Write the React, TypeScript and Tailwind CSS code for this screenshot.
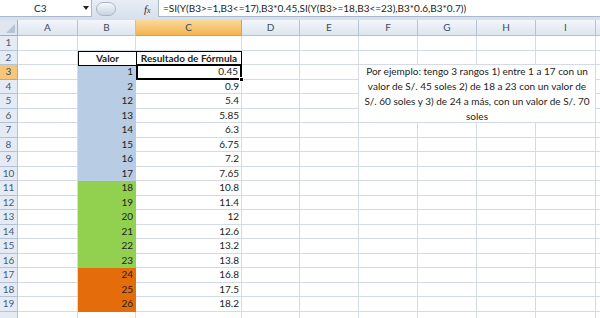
import React from "react";

const cols = ["A", "B", "C", "D", "E", "F", "G", "H", "I", ""];
type Row = { b?: string; c?: string; fill?: string };
const rows: Row[] = [
  {},
  {},
  { b: "1", c: "0.45", fill: "bg-[#b8cce4]" },
  { b: "2", c: "0.9", fill: "bg-[#b8cce4]" },
  { b: "12", c: "5.4", fill: "bg-[#b8cce4]" },
  { b: "13", c: "5.85", fill: "bg-[#b8cce4]" },
  { b: "14", c: "6.3", fill: "bg-[#b8cce4]" },
  { b: "15", c: "6.75", fill: "bg-[#b8cce4]" },
  { b: "16", c: "7.2", fill: "bg-[#b8cce4]" },
  { b: "17", c: "7.65", fill: "bg-[#b8cce4]" },
  { b: "18", c: "10.8", fill: "bg-[#92d050]" },
  { b: "19", c: "11.4", fill: "bg-[#92d050]" },
  { b: "20", c: "12", fill: "bg-[#92d050]" },
  { b: "21", c: "12.6", fill: "bg-[#92d050]" },
  { b: "22", c: "13.2", fill: "bg-[#92d050]" },
  { b: "23", c: "13.8", fill: "bg-[#92d050]" },
  { b: "24", c: "16.8", fill: "bg-[#e46c0a]" },
  { b: "25", c: "17.5", fill: "bg-[#e46c0a]" },
  { b: "26", c: "18.2", fill: "bg-[#e46c0a]" },
  {},
];

const grid = "border-r border-b border-[#d4dbe7]";

export default function App() {
  const cells: React.ReactNode[] = [];
  cells.push(
    <div key="corner" className="bg-[#dfe6f0] border-r border-b border-[#9eb0c8] relative">
      <div className="absolute right-[2px] bottom-[2px] w-0 h-0 border-l-[9px] border-l-transparent border-b-[9px] border-b-[#b6c3d6]" />
    </div>
  );
  cols.forEach((c, i) => {
    const active = c === "C";
    cells.push(
      <div
        key={"h" + i}
        className={
          "flex items-center justify-center text-[10px] text-[#3c4a60] border-r border-b " +
          (active
            ? "bg-gradient-to-b from-[#f9d99a] to-[#f2b44c] border-[#c2a56e]"
            : "bg-gradient-to-b from-[#f3f6fa] to-[#dde5ef] border-[#b4c2d5]")
        }
      >
        {c}
      </div>
    );
  });
  rows.forEach((r, ri) => {
    const n = ri + 1;
    const active = n === 3;
    cells.push(
      <div
        key={"r" + n}
        className={
          "flex items-center justify-center text-[10px] border-r border-b " +
          (active
            ? "bg-[#f6c77a] text-[#3c4a60] border-[#c9a86f]"
            : "bg-[#e4ebf5] text-[#4a5a78] border-[#b4c2d5]")
        }
      >
        {n < 20 ? n : ""}
      </div>
    );
    cells.push(<div key={"a" + n} className={grid} />);
    if (n === 2) {
      cells.push(
        <div key={"b" + n} className="border border-black flex items-center justify-center font-bold text-[10px] text-[#222] -mr-px -mb-px z-10">
          Valor
        </div>
      );
    } else {
      cells.push(
        <div
          key={"b" + n}
          className={
            "flex items-center justify-end pr-[2px] text-[10px] text-[#222] " +
            (r.fill ? r.fill + " border-r border-b border-transparent" : grid)
          }
        >
          {r.b}
        </div>
      );
    }
    if (n === 2) {
      cells.push(
        <div key={"c" + n} className="border border-black flex items-center justify-center font-bold text-[10px] text-[#222] -mb-px z-10">
          Resultado de Fórmula
        </div>
      );
    } else if (n === 3) {
      cells.push(
        <div key={"c" + n} className="relative border-2 border-black flex items-center justify-end pr-[2px] text-[10px] text-[#222] -mt-px z-10 bg-white">
          {r.c}
          <div className="absolute -right-[4px] -bottom-[4px] w-[5px] h-[5px] bg-black border border-white" />
        </div>
      );
    } else {
      cells.push(
        <div key={"c" + n} className={"flex items-center justify-end pr-[2px] text-[10px] text-[#222] " + grid}>
          {r.c}
        </div>
      );
    }
    cells.push(<div key={"d" + n} className={grid} />);
    cells.push(<div key={"e" + n} className={grid} />);
    if (n === 3) {
      cells.push(
        <div
          key="merged"
          className={"col-span-4 row-span-4 flex items-center justify-center text-center text-[10px] leading-[15px] text-[#222] px-[2px] " + grid}
        >
          Por ejemplo: tengo 3 rangos 1) entre 1 a 17 con un valor de S/. 45 soles 2) de 18 a 23 con un valor de S/. 60 soles y 3) de 24 a más, con un valor de S/. 70 soles
        </div>
      );
    } else if (n < 3 || n > 6) {
      ["f", "g", "h", "i"].forEach((k) => cells.push(<div key={k + n} className={grid} />));
    }
    cells.push(<div key={"j" + n} className={grid} />);
  });

  return (
    <div className="w-[600px] h-[318px] overflow-hidden bg-white" style={{ fontFamily: "Lato, 'Open Sans', sans-serif" }}>
      <div className="h-[20px] bg-gradient-to-b from-[#e9eef6] to-[#d5dfec] flex items-start">
        <div className="h-[17px] w-[92px] bg-white border-r border-b border-[#a9b8cc] flex items-center relative">
          <span className="text-[10px] text-[#222] ml-[34px]">C3</span>
          <span className="absolute right-[2px] top-[6px] w-0 h-0 border-l-[3px] border-r-[3px] border-t-[4px] border-l-transparent border-r-transparent border-t-[#222]" />
        </div>
        <div className="h-[17px] w-[66px] flex items-center relative">
          <div className="ml-[4px] h-[14px] w-[20px] rounded-full bg-gradient-to-b from-[#f6f8fb] to-[#c9d3df] border border-[#aab6c6]" />
          <span className="absolute left-[52px] top-[1px] text-[11px] italic text-[#333]" style={{ fontFamily: "'Liberation Serif', serif" }}>
            f<span className="text-[8px]">x</span>
          </span>
        </div>
        <div className="h-[17px] flex-1 bg-white border-l border-b border-[#a9b8cc] flex items-center pl-[4px]">
          <span className="text-[10px] text-[#222] whitespace-nowrap">
            =SI(Y(B3&gt;=1,B3&lt;=17),B3*0.45,SI(Y(B3&gt;=18,B3&lt;=23),B3*0.6,B3*0.7))
          </span>
        </div>
      </div>
      <div className="grid grid-cols-[18px_60px_58px_106px_58px_59px_59px_59px_59px_60px_40px] grid-rows-[16px_repeat(20,14.5px)]">
        {cells}
      </div>
    </div>
  );
}
